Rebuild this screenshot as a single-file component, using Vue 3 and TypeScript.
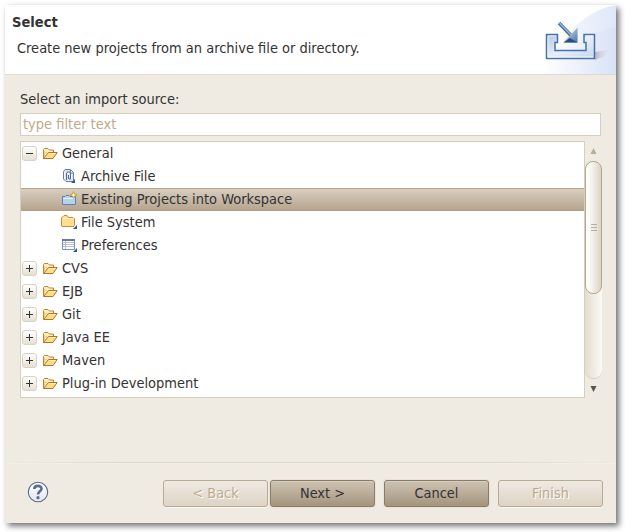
<script setup lang="ts">
import { ref } from 'vue'

type Icon = 'folder' | 'archive' | 'project' | 'files' | 'table'
interface Item {
  label: string
  icon: Icon
  child?: boolean
  open?: boolean
}

const items: Item[] = [
  { label: 'General', icon: 'folder', open: true },
  { label: 'Archive File', icon: 'archive', child: true },
  { label: 'Existing Projects into Workspace', icon: 'project', child: true },
  { label: 'File System', icon: 'files', child: true },
  { label: 'Preferences', icon: 'table', child: true },
  { label: 'CVS', icon: 'folder' },
  { label: 'EJB', icon: 'folder' },
  { label: 'Git', icon: 'folder' },
  { label: 'Java EE', icon: 'folder' },
  { label: 'Maven', icon: 'folder' },
  { label: 'Plug-in Development', icon: 'folder' },
]
const selected = ref('Existing Projects into Workspace')
const filter = ref('')
</script>

<template>
  <div class="page">
  <main class="dialog">
    <header class="banner">
      <div class="heading">
        <h1>Select</h1>
        <p>Create new projects from an archive file or directory.</p>
      </div>
      <svg class="art" width="96" height="69" viewBox="0 0 96 69">
        <defs>
          <linearGradient id="sky" x1="0" y1="0" x2="1" y2="0">
            <stop offset="0" stop-color="#fff" />
            <stop offset="1" stop-color="#dfe7f8" />
          </linearGradient>
          <linearGradient id="sky2" x1="0" y1="0" x2="1" y2="0">
            <stop offset="0" stop-color="#fff" />
            <stop offset="1" stop-color="#d5dff5" />
          </linearGradient>
          <linearGradient id="shade" x1="0" y1="0" x2="1" y2="0">
            <stop offset="0" stop-color="#bcb6c8" />
            <stop offset="1" stop-color="#e6e5f2" stop-opacity="0" />
          </linearGradient>
          <linearGradient id="tray" x1="0" y1="0" x2="1" y2="1">
            <stop offset="0" stop-color="#b4c8e2" />
            <stop offset="0.5" stop-color="#e6eef9" />
            <stop offset="1" stop-color="#c8d6ec" />
          </linearGradient>
          <linearGradient id="head" x1="0" y1="0" x2="1" y2="1">
            <stop offset="0.25" stop-color="#bdd5ee" />
            <stop offset="1" stop-color="#47709f" />
          </linearGradient>
          <radialGradient id="glow">
            <stop offset="0" stop-color="#fff3a8" />
            <stop offset="1" stop-color="#fffbe0" stop-opacity="0" />
          </radialGradient>
        </defs>
        <path d="M22 69C40 34 60 7 96 0V69Z" fill="url(#sky)" />
        <path d="M22 69C42 47 65 27 96 22V69Z" fill="url(#sky2)" opacity=".6" />
        <circle cx="51" cy="31" r="11" fill="url(#glow)" opacity=".8" />
        <path d="M75 47L92 44L85 51L75 55Z" fill="url(#shade)" />
        <path d="M26.500 29.500H37.500V37.500H35V45.500H66V37.500H64V29.500H74.500V53.500H26.500Z" fill="url(#tray)" stroke="#4672a9" stroke-width="1.500" />
        <path d="M28 52V31H36M66 31H73M28 52H73" fill="none" stroke="#f4f8fd" opacity=".8" />
        <path d="M39 18L51.500 31" stroke="#466f9e" stroke-width="3.500" />
        <path d="M39.500 18L51 30" stroke="#9bbad6" stroke-width="1.300" />
        <path d="M57.500 22.500V37.500H43.500Z" fill="url(#head)" />
        <path d="M43.500 37.500L50 33L57.500 37.500Z" fill="#244e8c" />
      </svg>
    </header>

    <section class="content">
      <label for="source">Select an import source:</label>
      <input id="source" v-model="filter" placeholder="type filter text" />
      <div class="browser">
        <div class="tree">
          <div
            v-for="item in items"
            :key="item.label"
            class="row"
            :class="{ child: item.child, selected: selected === item.label }"
            @click="selected = item.label"
          >
            <span v-if="!item.child" class="toggle">
              <svg width="7" height="7" viewBox="0 0 7 7" shape-rendering="crispEdges">
                <path d="M0 3.500H7" stroke="#333" />
                <path v-if="!item.open" d="M3.500 0V7" stroke="#333" />
              </svg>
            </span>
            <svg class="icon" width="16" height="16" viewBox="0 0 16 16">
              <g v-if="item.icon === 'folder'">
                <path d="M1.500 13V4.500L2.500 3.500H6L7.500 5H11.500V7.500" fill="#ffedbd" stroke="#bd852f" />
                <path d="M1.500 13.500L6.500 7.500H15.200L11 13.500Z" fill="#ffdd85" stroke="#b37328" />
                <path d="M7 8.500H13.500" stroke="#fff1c1" />
                <path d="M2 7.500H5M2.500 6V11" fill="none" stroke="#f5cd72" />
              </g>
              <g v-else-if="item.icon === 'archive'">
                <path d="M2.500 3.500L4 1.500H9.500L12.500 4.500V13.500H5L2.500 11Z" fill="#d7e6f5" stroke="#6880a2" />
                <path d="M9.500 2V5H12" fill="#fff" stroke="#6880a2" />
                <path d="M3.500 4V11M7.500 5V13M10.500 6V11" stroke="#fff" />
                <path d="M5.500 12V6C5.500 3 9.500 3 9.500 6V11H7.500V7" fill="none" stroke="#526c94" />
                <path d="M14 11V15H10Z" fill="#255c96" />
              </g>
              <g v-else-if="item.icon === 'project'">
                <path d="M1.500 13.500V5.500H4L5 4.500H8L9 5.500H14.500V13.500Z" fill="#b5d1f2" stroke="#6b7fae" />
                <path d="M2.500 7.500H13" stroke="#e7f2ff" />
                <path d="M12.500 .5L13.500 3L16 4L13.500 5L12.500 7.500L11.500 5L9 4L11.500 3Z" fill="#fff8a4" stroke="#b99636" stroke-width=".8" />
              </g>
              <g v-else-if="item.icon === 'files'">
                <path d="M.500 12V4L2 2.500L3 1.500H6L7.500 3.500H12L13.500 5V11L12.500 12.500H1Z" fill="#ffdf8c" stroke="#c68a3a" />
                <path d="M1.500 4.500H12.500" stroke="#fff3c6" />
                <path d="M16 11V15H12Z" fill="#255c96" />
              </g>
              <g v-else>
                <path d="M1.500 2.500H13.500V12.500H1.500Z" fill="#fff" stroke="#8190ae" />
                <path d="M1 3H14" stroke="#667a9e" stroke-width="2" />
                <path d="M2 5.500H13M2 7.500H13M2 9.500H13M4.500 4V12" stroke="#b4c0d2" />
                <path d="M16 11V15H12Z" fill="#255c96" />
              </g>
            </svg>
            <span class="label">{{ item.label }}</span>
          </div>
        </div>
        <div class="scroll">
          <svg class="arrow up" width="7" height="6"><path d="M3.500 0L6.500 6H.5Z" /></svg>
          <div class="track"><div class="thumb"><i></i><i></i><i></i></div></div>
          <svg class="arrow" width="7" height="6"><path d="M.5 0H6.500L3.500 6Z" /></svg>
        </div>
      </div>
    </section>

    <footer>
      <div class="rule"></div>
      <div class="actions">
        <svg class="help" width="22" height="22" viewBox="0 0 22 22">
          <defs><linearGradient id="helpbg" x2="0" y2="1"><stop stop-color="#fff" /><stop offset="1" stop-color="#e4e6ee" /></linearGradient></defs>
          <circle cx="11" cy="11" r="9.700" fill="url(#helpbg)" stroke="#596b89" stroke-width="1.100" />
          <path d="M7.300 8C7.400 3.800 14.700 3.900 14.500 7.800C14.400 10.300 11 10.500 11 13.500" fill="none" stroke="#5a6c91" stroke-width="2.600" />
          <circle cx="11" cy="16.700" r="1.600" fill="#5a6c91" />
        </svg>
        <button class="back" disabled>&lt; Back</button>
        <button class="next">Next &gt;</button>
        <button class="cancel">Cancel</button>
        <button class="finish" disabled>Finish</button>
      </div>
    </footer>
  </main>
  </div>
</template>

<style>
body {
  background: #fff;
}
</style>

<style scoped>
* {
  box-sizing: border-box;
}
.page {
  height: 532px;
  padding: 5px 0 0 5px;
  overflow: hidden;
}
.dialog {
  width: 611px;
  height: 518px;
  background: #efebe3;
  box-shadow: 3px 3px 6px 0 #707070;
  font: 14.48px/23px "DejaVu Sans Condensed", "DejaVu Sans", sans-serif;
  font-stretch: condensed;
  color: #333;
  display: flex;
  flex-direction: column;
}
.banner {
  height: 70px;
  background: #fff;
  border-bottom: 1px solid #e0dacb;
  display: flex;
  justify-content: space-between;
}
.heading {
  padding: 5px 0 0 7px;
}
h1 {
  margin: 0;
  font-size: 14.6px;
  line-height: 23px;
}
p {
  margin: 4px 0 0 5px;
}
.art {
  display: block;
}
.content {
  padding: 13px 14px 0 15px;
}
label {
  display: block;
  height: 25px;
}
input {
  display: block;
  width: 581px;
  height: 23px;
  border: 1px solid #d7cebb;
  padding: 0 2px;
  font: inherit;
  outline: none;
  background: #fff;
}
input::placeholder {
  color: #bfa98b;
  opacity: 1;
}
.browser {
  display: flex;
  height: 257px;
  margin-top: 5px;
}
.tree {
  width: 565px;
  border: 1px solid #d7cebb;
  background: #fff;
}
.row {
  display: flex;
  align-items: center;
  height: 23px;
  padding-left: 1px;
}
.row.child {
  padding-left: 40px;
}
.row.selected {
  background: linear-gradient(#d8cec0, #b5a58f);
  border-top: 1px solid #b8a78f;
  border-bottom: 1px solid #b29c82;
}
.toggle {
  width: 15px;
  height: 15px;
  display: grid;
  place-items: center;
  border: 1px solid #d9d1c1;
  border-radius: 3px;
  background: linear-gradient(#fff, #e6dfd3);
  margin-right: 5px;
}
.icon {
  flex: none;
  margin-bottom: 1px;
}
.label {
  margin-left: 4px;
  white-space: nowrap;
}
.scroll {
  width: 17px;
  display: flex;
  flex-direction: column;
  align-items: center;
  padding-top: 7px;
}
.arrow {
  fill: #555;
}
.arrow.up {
  fill: #b9ad99;
}
.track {
  width: 17px;
  height: 218px;
  margin: 7px 0 7px;
  border-radius: 8px;
  background: linear-gradient(90deg, #e4dccd, #fbfaf7);
  box-shadow: inset 0 -1px #d9d2c6;
}
.thumb {
  width: 17px;
  height: 133px;
  border: 1px solid #b7a78c;
  border-radius: 8px;
  background: linear-gradient(90deg, #fff, #f7f5f0 35%, #dbd3c5);
  display: flex;
  flex-direction: column;
  align-items: center;
  justify-content: center;
  gap: 2px;
}
.thumb i {
  width: 6px;
  height: 1px;
  background: #b9ae9b;
}
footer {
  margin-top: auto;
  height: 61px;
}
.rule {
  height: 2px;
  background: linear-gradient(90deg, #efebe3, #ded8c7 20%, #ded8c7 80%, #efebe3);
  border-bottom: 1px solid #f1eee7;
}
.actions {
  display: flex;
  padding: 16px 13px 0 22px;
}
.help {
  margin-top: 1px;
}
button {
  width: 105px;
  height: 27px;
  padding: 0;
  font: inherit;
  font-size: 14.4px;
  color: #333;
  border: 1px solid #8c7b65;
  border-radius: 3px;
  background: linear-gradient(#cec3b3, #a4947d);
  box-shadow: 0 0 0 1px #e9e3d9, inset 0 1px #d8cec0;
}
button:disabled {
  color: #bfa98b;
  text-shadow: 1px 1px #fff;
  border-color: #b9aa92;
  background: linear-gradient(#efeae1, #ddd3c6);
  box-shadow: 0 1px #f8f5ef;
}
.back {
  margin-left: 114px;
}
.next {
  margin-left: 2px;
}
.cancel,
.finish {
  margin-left: 9px;
}
</style>
